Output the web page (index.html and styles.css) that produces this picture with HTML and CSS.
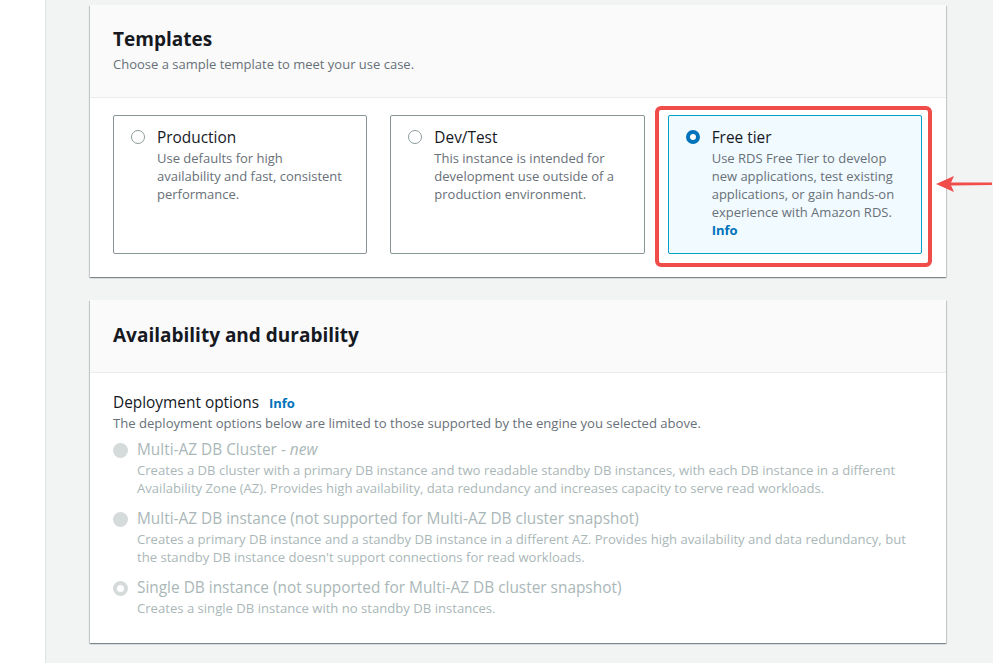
FILE: index.html
```html
<!DOCTYPE html>
<html lang="en">
<head>
<meta charset="utf-8">
<title>Create database</title>
<link rel="stylesheet" href="styles.css">
</head>
<body>
<div class="page">
  <aside class="sidebar"></aside>
  <main class="main">
    <section class="card">
      <header class="card-header">
        <h2 class="card-title">Templates</h2>
        <p class="card-subtitle">Choose a sample template to meet your use case.</p>
      </header>
      <div class="card-body tiles-body">
        <div class="tiles">
          <label class="tile">
            <span class="radio"></span>
            <span class="tile-text">
              <span class="tile-title">Production</span>
              <span class="tile-desc">Use defaults for high availability and fast, consistent performance.</span>
            </span>
          </label>
          <label class="tile">
            <span class="radio"></span>
            <span class="tile-text">
              <span class="tile-title">Dev/Test</span>
              <span class="tile-desc">This instance is intended for development use outside of a production environment.</span>
            </span>
          </label>
          <label class="tile tile-selected">
            <span class="radio radio-checked"></span>
            <span class="tile-text">
              <span class="tile-title">Free tier</span>
              <span class="tile-desc">Use RDS Free Tier to develop new applications, test existing applications, or gain hands-on experience with Amazon RDS.</span>
              <a class="info-link" href="#">Info</a>
            </span>
          </label>
        </div>
        <div class="highlight"></div>
      </div>
    </section>

    <section class="card">
      <header class="card-header card-header-plain">
        <h2 class="card-title">Availability and durability</h2>
      </header>
      <div class="card-body options-body">
        <div class="field-label">Deployment options <a class="info-link info-inline" href="#">Info</a></div>
        <p class="field-desc">The deployment options below are limited to those supported by the engine you selected above.</p>
        <div class="options">
          <div class="option">
            <span class="radio radio-disabled"></span>
            <div class="option-text">
              <div class="option-title">Multi-AZ DB Cluster - <em>new</em></div>
              <div class="option-desc">Creates a DB cluster with a primary DB instance and two readable standby DB instances, with each DB instance in a different Availability Zone (AZ). Provides high availability, data redundancy and increases capacity to serve read workloads.</div>
            </div>
          </div>
          <div class="option">
            <span class="radio radio-disabled"></span>
            <div class="option-text">
              <div class="option-title">Multi-AZ DB instance (not supported for Multi-AZ DB cluster snapshot)</div>
              <div class="option-desc">Creates a primary DB instance and a standby DB instance in a different AZ. Provides high availability and data redundancy, but the standby DB instance doesn't support connections for read workloads.</div>
            </div>
          </div>
          <div class="option">
            <span class="radio radio-disabled radio-disabled-checked"></span>
            <div class="option-text">
              <div class="option-title">Single DB instance (not supported for Multi-AZ DB cluster snapshot)</div>
              <div class="option-desc">Creates a single DB instance with no standby DB instances.</div>
            </div>
          </div>
        </div>
      </div>
    </section>

    <svg class="arrow" width="56" height="18" viewBox="0 0 56 18" aria-hidden="true">
      <polygon points="0,9 18,1 15,7.5 56,7.6 56,10 15,10.6 18,17" fill="#ef4c4a"/>
    </svg>
  </main>
</div>
</body>
</html>
```

FILE: styles.css
```css
* { box-sizing: border-box; }

html, body {
  margin: 0;
  padding: 0;
  height: 100%;
}

body {
  font-family: "Open Sans", "Noto Sans", "Liberation Sans", sans-serif;
  color: #16191f;
  background: #f2f3f3;
}

.page {
  display: flex;
  min-height: 100vh;
}

.sidebar {
  width: 46px;
  flex: 0 0 46px;
  background: #ffffff;
  border-right: 1px solid #dfe3e3;
}

.main {
  position: relative;
  flex: 1;
  padding: 5px 47px 20px 44px;
  display: flex;
  flex-direction: column;
  gap: 23px;
}

.card {
  background: #ffffff;
  box-shadow: 0 1px 1px 0 rgba(0, 28, 36, 0.3), 1px 1px 1px 0 rgba(0, 28, 36, 0.15), -1px 1px 1px 0 rgba(0, 28, 36, 0.15);
}

.card-header {
  background: #fafafa;
  border-bottom: 1px solid #eaeded;
  padding: 21px 23px 24px;
}

.card-header-plain {
  padding-top: 22px;
  padding-bottom: 24px;
}

.card-title {
  margin: 0;
  font-size: 19px;
  line-height: 26px;
  font-weight: 700;
  color: #16191f;
}

.card-subtitle {
  margin: 3px 0 0;
  font-size: 13px;
  line-height: 18px;
  color: #687078;
}

.card-body {
  position: relative;
}

.tiles-body {
  padding: 17px 24px 23px 23px;
}

.tiles {
  display: grid;
  grid-template-columns: repeat(3, 1fr);
  gap: 23px;
}

.tile {
  display: flex;
  align-items: flex-start;
  gap: 12px;
  border: 1px solid #879596;
  border-radius: 2px;
  padding: 10px 19px 14px 17px;
  min-height: 139px;
}

.tile-selected {
  background: #f1faff;
  border-color: #00a1c9;
}

.tile-text {
  display: flex;
  flex-direction: column;
}

.tile-title {
  font-size: 15.4px;
  line-height: 23px;
  color: #16191f;
}

.tile-desc {
  font-size: 13px;
  line-height: 18px;
  color: #687078;
}

.info-link {
  font-size: 13px;
  line-height: 18px;
  font-weight: 700;
  color: #0073bb;
  text-decoration: none;
}

.info-inline {
  margin-left: 6px;
}

.radio {
  flex: 0 0 14px;
  width: 14px;
  height: 14px;
  margin-top: 4px;
  border-radius: 50%;
  border: 1.5px solid #8d9c9d;
  background: #ffffff;
}

.radio-checked {
  border: 4px solid #0073bb;
}

.radio-disabled {
  flex: 0 0 15px;
  width: 15px;
  height: 15px;
  border: none;
  background: #d5dbdb;
}

.radio-disabled-checked {
  border: 4.5px solid #d5dbdb;
  background: #ffffff;
}

.highlight {
  position: absolute;
  left: 565px;
  top: 8px;
  width: 277px;
  height: 161px;
  border: 4px solid #ef4c4a;
  border-radius: 6px;
  pointer-events: none;
}

.arrow {
  position: absolute;
  left: 890px;
  top: 175px;
}

.options-body {
  padding: 19px 23px 26px 23px;
}

.field-label {
  font-size: 15.4px;
  line-height: 22px;
  color: #16191f;
}

.field-desc {
  margin: 0;
  font-size: 13.1px;
  line-height: 18px;
  color: #687078;
}

.options {
  margin-top: 7px;
  display: flex;
  flex-direction: column;
  gap: 11px;
}

.option {
  display: flex;
  align-items: flex-start;
  gap: 9px;
}

.option .radio {
  margin-top: 4px;
}

.option-title {
  font-size: 15.4px;
  line-height: 22px;
  color: #aab7b8;
}

.option-title em {
  font-style: italic;
}

.option-desc {
  font-size: 13.1px;
  line-height: 18px;
  color: #aab7b8;
}
```
